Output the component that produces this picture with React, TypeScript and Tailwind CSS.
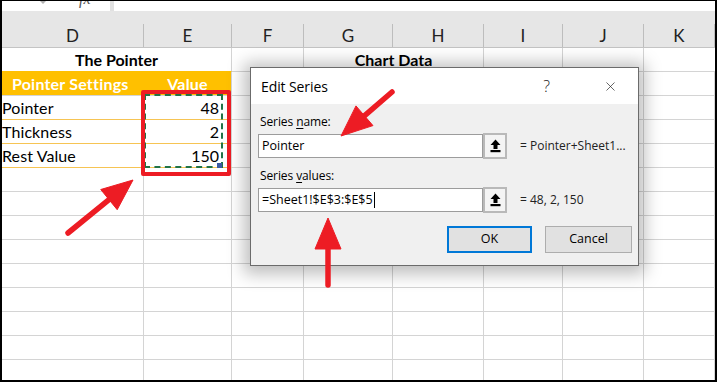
import { X } from "lucide-react";

const cols = [
  { key: "D", w: "w-[142px]" },
  { key: "E", w: "w-[88px]" },
  { key: "F", w: "w-[72px]" },
  { key: "G", w: "w-[89px]" },
  { key: "H", w: "w-[91px]" },
  { key: "I", w: "w-[79px]" },
  { key: "J", w: "w-[81px]" },
  { key: "K", w: "w-[71px]" },
];

const rest = cols.slice(2);
const data = [
  { name: "Pointer", value: 48 },
  { name: "Thickness", value: 2 },
  { name: "Rest Value", value: 150 },
];

function head(fx: number, fy: number, tx: number, ty: number, len = 31, half = 13) {
  const dx = tx - fx;
  const dy = ty - fy;
  const d = Math.hypot(dx, dy);
  const ux = dx / d;
  const uy = dy / d;
  const bx = tx - ux * len;
  const by = ty - uy * len;
  const px = -uy * half;
  const py = ux * half;
  return {
    pts: `${tx},${ty} ${bx + px},${by + py} ${bx - px},${by - py}`,
    bx: tx - ux * (len - 4),
    by: ty - uy * (len - 4),
  };
}

function Arrow({ fx, fy, tx, ty }: { fx: number; fy: number; tx: number; ty: number }) {
  const h = head(fx, fy, tx, ty);
  return (
    <g fill="#ed1c24" stroke="#ed1c24">
      <line x1={fx} y1={fy} x2={h.bx} y2={h.by} strokeWidth={5.5} strokeLinecap="round" />
      <polygon points={h.pts} strokeWidth={1} strokeLinejoin="round" />
    </g>
  );
}

function EmptyCells() {
  return (
    <>
      {rest.map((c) => (
        <div key={c.key} className={`${c.w} h-full border-r border-[#d4d4d4]`} />
      ))}
    </>
  );
}

function PickButton() {
  return (
    <div className="w-[24px] h-[26px] -my-[1px] border-2 border-[#b9b9b9] bg-[#f4f4f4] flex items-center justify-center">
      <svg width="11" height="14" viewBox="0 0 11 14">
        <polygon points="5.5,0.5 10.5,6 7.5,6 7.5,10 3.5,10 3.5,6 0.5,6" fill="#000" />
        <rect x="0.5" y="11" width="10" height="2.2" fill="#000" />
      </svg>
    </div>
  );
}

export default function App() {
  return (
    <div className="relative w-[717px] h-[382px] overflow-hidden bg-white">
      <div className="w-[717px] h-[382px] border-2 border-t border-black flex flex-col overflow-hidden font-['Lato'] text-black">
        {/* formula bar strip */}
        <div className="h-[10px] shrink-0 flex overflow-hidden">
          <div className="w-[108px] bg-white flex">
            <svg className="ml-[37px]" width="8" height="4" viewBox="0 0 8 4">
              <polygon points="1,0 7,0 4,3" fill="#b0b0b0" />
            </svg>
            <span className="ml-[32px] -mt-[10px] text-[16px] italic font-['Liberation_Serif'] text-[#555] leading-none">fx</span>
          </div>
          <div className="w-[4px] bg-[#e1e1e1]" />
          <div className="flex-1 bg-white" />
        </div>
        <div className="h-[13px] shrink-0 bg-[#e6e6e6]" />
        {/* column header */}
        <div className="h-[24px] shrink-0 flex bg-[#e6e6e6] border-b border-[#c4c4c4]">
          {cols.map((c) => (
            <div
              key={c.key}
              className={`${c.w} h-full border-r border-[#bdbdbd] flex items-center justify-center text-[17px] text-[#222]`}
            >
              {c.key}
            </div>
          ))}
        </div>
        {/* row 1 */}
        <div className="h-[24px] shrink-0 flex">
          <div className="w-[230px] h-full border-r border-b border-[#d4d4d4] border-b-[#ffc000] flex items-center justify-center text-[16px] font-bold">
            The Pointer
          </div>
          <div className="w-[72px] h-full border-r border-b border-[#d4d4d4]" />
          <div className="w-[180px] h-full border-r border-b border-[#d4d4d4] flex items-center justify-center text-[16px] font-bold">
            Chart Data
          </div>
          <div className="w-[79px] h-full border-r border-b border-[#d4d4d4]" />
          <div className="w-[81px] h-full border-r border-b border-[#d4d4d4]" />
          <div className="w-[71px] h-full border-b border-[#d4d4d4]" />
        </div>
        {/* row 2 */}
        <div className="h-[24px] shrink-0 flex border-b border-[#d4d4d4]">
          <div className="w-[142px] h-full bg-[#ffc000] flex items-center pl-[10px] text-[16px] font-bold text-white tracking-[0.2px]">
            Pointer Settings
          </div>
          <div className="w-[88px] h-full bg-[#ffc000] border-r border-[#d4d4d4] flex items-center justify-center text-[16px] font-bold text-white tracking-[0.2px]">
            Value
          </div>
          <EmptyCells />
        </div>
        {/* data rows */}
        {data.map((r) => (
          <div key={r.name} className="h-[24px] shrink-0 flex border-b border-[#d4d4d4]">
            <div className="w-[142px] h-[24px] -mb-[1px] border-r border-b border-[#d4d4d4] border-b-[#f6c453] flex items-center text-[16px] tracking-[0.1px]">
              {r.name}
            </div>
            <div className="w-[88px] h-[24px] -mb-[1px] border-r border-b border-[#d4d4d4] border-b-[#f6c453] flex items-center justify-end pr-[12px] text-[16px]">
              {r.value}
            </div>
            <EmptyCells />
          </div>
        ))}
        {/* empty rows */}
        {Array.from({ length: 9 }).map((_, i) => (
          <div key={i} className="h-[24px] shrink-0 flex border-b border-[#d4d4d4]">
            <div className="w-[142px] h-full border-r border-[#d4d4d4]" />
            <div className="w-[88px] h-full border-r border-[#d4d4d4]" />
            <EmptyCells />
          </div>
        ))}
      </div>

      {/* copy selection and highlight */}
      <div className="absolute left-[144px] top-[94px] w-[79px] h-[74px] border-2 border-dashed border-[#217346]" />
      <div className="absolute left-[217px] top-[163px] w-[5px] h-[5px] bg-[#3b5aa3]" />
      <div className="absolute left-[141px] top-[90px] w-[90px] h-[86px] border-4 border-[#ed1c24] rounded-[2px]" />

      {/* dialog */}
      <div className="absolute left-[250px] top-[67px] w-[389px] h-[199px] border border-[#6b6b6b] bg-[#f0f0f0] shadow-[0_2px_16px_6px_rgba(0,0,0,0.26)] flex flex-col font-['Open_Sans'] text-black">
        <div className="h-[36px] shrink-0 bg-white flex items-center pl-[10px]">
          <span className="text-[14px] tracking-[-0.1px]">Edit Series</span>
          <span className="ml-auto mr-[53px] text-[16px] font-light text-[#222]">?</span>
          <X className="w-[15px] h-[15px] mr-[20px] text-[#222]" strokeWidth={1.1} />
        </div>
        <div className="flex flex-col pl-[7px] pt-[10px]">
          <div className="h-[16px] flex items-center pl-[2px] text-[12px] tracking-[-0.1px]">
            Series&nbsp;<span className="underline underline-offset-2">n</span>ame:
          </div>
          <div className="mt-[4px] h-[24px] flex items-center">
            <div className="w-[225px] h-[24px] border border-[#9c9c9c] bg-white flex items-center pl-[3px] text-[12.5px]">
              Pointer
            </div>
            <PickButton />
            <span className="ml-[13px] text-[12px] text-[#222]">= Pointer+Sheet1...</span>
          </div>
          <div className="mt-[10px] h-[16px] flex items-center pl-[2px] text-[12px] tracking-[-0.1px]">
            Series&nbsp;<span className="underline underline-offset-2">v</span>alues:
          </div>
          <div className="mt-[4px] h-[24px] flex items-center">
            <div className="w-[225px] h-[24px] border border-[#9c9c9c] bg-white flex items-center pl-[3px] text-[12.5px]">
              =Sheet1!$E$3:$E$5
              <span className="ml-[1px] w-[1px] h-[16px] bg-black" />
            </div>
            <PickButton />
            <span className="ml-[13px] text-[12px] text-[#222]">= 48, 2, 150</span>
          </div>
          <div className="mt-[14px] flex">
            <div className="ml-[189px] w-[85px] h-[27px] border-2 border-[#0078d7] bg-[#e1e1e1] flex items-center justify-center text-[12.5px]">
              OK
            </div>
            <div className="ml-[13px] w-[87px] h-[27px] border border-[#adadad] bg-[#e1e1e1] flex items-center justify-center text-[12.5px]">
              Cancel
            </div>
          </div>
        </div>
      </div>

      {/* arrows */}
      <svg className="absolute left-0 top-0 pointer-events-none" width="717" height="382">
        <Arrow fx={392} fy={92} tx={341} ty={136} />
        <Arrow fx={68} fy={233} tx={133} ty={180} />
        <Arrow fx={328} fy={285} tx={328} ty={218} />
      </svg>
    </div>
  );
}
